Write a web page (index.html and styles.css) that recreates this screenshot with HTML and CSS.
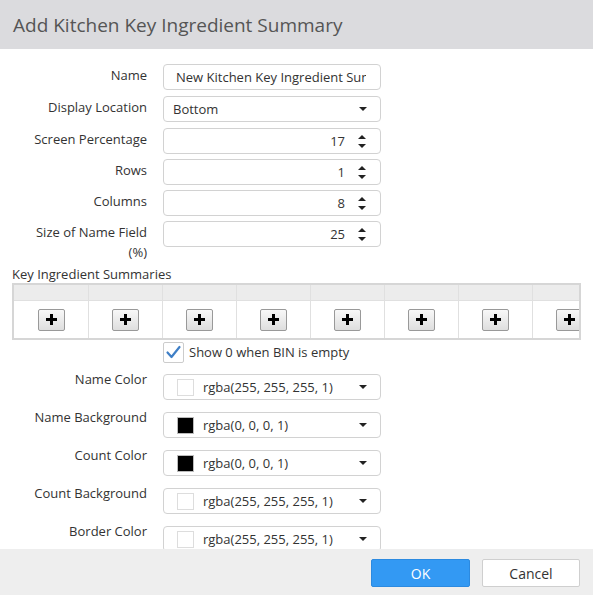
FILE: index.html
```html
<!DOCTYPE html>
<html>
<head>
<meta charset="utf-8">
<link rel="stylesheet" href="styles.css">
</head>
<body>
<div class="dialog">
  <div class="header"><h1 class="title">Add Kitchen Key Ingredient Summary</h1></div>
  <div class="content">
    <div class="form">
      <div class="row first">
        <div class="label">Name</div>
        <input class="field text" type="text" value="New Kitchen Key Ingredient Summary" readonly>
      </div>
      <div class="row first">
        <div class="label">Display Location</div>
        <div class="field select"><span class="val">Bottom</span><span class="caret"></span></div>
      </div>
      <div class="row">
        <div class="label">Screen Percentage</div>
        <div class="field number"><span class="num">17</span><span class="spin"><i class="up"></i><i class="down"></i></span></div>
      </div>
      <div class="row">
        <div class="label">Rows</div>
        <div class="field number"><span class="num">1</span><span class="spin"><i class="up"></i><i class="down"></i></span></div>
      </div>
      <div class="row">
        <div class="label">Columns</div>
        <div class="field number"><span class="num">8</span><span class="spin"><i class="up"></i><i class="down"></i></span></div>
      </div>
      <div class="row">
        <div class="label">Size of Name Field<br>(%)</div>
        <div class="field number"><span class="num">25</span><span class="spin"><i class="up"></i><i class="down"></i></span></div>
      </div>
    </div>

    <div class="section-title">Key Ingredient Summaries</div>
    <div class="grid">
      <div class="cols">
        <div class="col"><div class="col-head"></div><div class="col-body"><span class="plus"><svg width="11" height="11" viewBox="0 0 11 11"><path d="M4 0h3v4h4v3H7v4H4V7H0V4h4z" fill="#000"/></svg></span></div></div>
        <div class="col"><div class="col-head"></div><div class="col-body"><span class="plus"><svg width="11" height="11" viewBox="0 0 11 11"><path d="M4 0h3v4h4v3H7v4H4V7H0V4h4z" fill="#000"/></svg></span></div></div>
        <div class="col"><div class="col-head"></div><div class="col-body"><span class="plus"><svg width="11" height="11" viewBox="0 0 11 11"><path d="M4 0h3v4h4v3H7v4H4V7H0V4h4z" fill="#000"/></svg></span></div></div>
        <div class="col"><div class="col-head"></div><div class="col-body"><span class="plus"><svg width="11" height="11" viewBox="0 0 11 11"><path d="M4 0h3v4h4v3H7v4H4V7H0V4h4z" fill="#000"/></svg></span></div></div>
        <div class="col"><div class="col-head"></div><div class="col-body"><span class="plus"><svg width="11" height="11" viewBox="0 0 11 11"><path d="M4 0h3v4h4v3H7v4H4V7H0V4h4z" fill="#000"/></svg></span></div></div>
        <div class="col"><div class="col-head"></div><div class="col-body"><span class="plus"><svg width="11" height="11" viewBox="0 0 11 11"><path d="M4 0h3v4h4v3H7v4H4V7H0V4h4z" fill="#000"/></svg></span></div></div>
        <div class="col"><div class="col-head"></div><div class="col-body"><span class="plus"><svg width="11" height="11" viewBox="0 0 11 11"><path d="M4 0h3v4h4v3H7v4H4V7H0V4h4z" fill="#000"/></svg></span></div></div>
        <div class="col"><div class="col-head"></div><div class="col-body"><span class="plus"><svg width="11" height="11" viewBox="0 0 11 11"><path d="M4 0h3v4h4v3H7v4H4V7H0V4h4z" fill="#000"/></svg></span></div></div>
      </div>
    </div>

    <div class="check-row">
      <span class="checkbox"><svg width="19" height="19" viewBox="0 0 19 19"><path d="M3.5 9.5l4 4.5 8-10" fill="none" stroke="#3f7fc6" stroke-width="2.2" stroke-linecap="round" stroke-linejoin="round"/></svg></span>
      <span class="check-label">Show 0 when BIN is empty</span>
    </div>

    <div class="colors">
      <div class="crow">
        <div class="label">Name Color</div>
        <div class="field color"><span class="swatch white"></span><span class="val">rgba(255, 255, 255, 1)</span><span class="caret"></span></div>
      </div>
      <div class="crow">
        <div class="label">Name Background</div>
        <div class="field color"><span class="swatch black"></span><span class="val">rgba(0, 0, 0, 1)</span><span class="caret"></span></div>
      </div>
      <div class="crow">
        <div class="label">Count Color</div>
        <div class="field color"><span class="swatch black"></span><span class="val">rgba(0, 0, 0, 1)</span><span class="caret"></span></div>
      </div>
      <div class="crow">
        <div class="label">Count Background</div>
        <div class="field color"><span class="swatch white"></span><span class="val">rgba(255, 255, 255, 1)</span><span class="caret"></span></div>
      </div>
      <div class="crow">
        <div class="label">Border Color</div>
        <div class="field color"><span class="swatch white"></span><span class="val">rgba(255, 255, 255, 1)</span><span class="caret"></span></div>
      </div>
    </div>
  </div>
  <div class="footer">
    <button class="btn ok">OK</button>
    <button class="btn cancel">Cancel</button>
  </div>
</div>
</body>
</html>
```

FILE: styles.css
```css
* { box-sizing: border-box; }
html, body { margin: 0; padding: 0; }
body {
  font-family: "Open Sans", "Noto Sans", sans-serif;
  font-size: 13px;
  color: #333;
  background: #fff;
}
.dialog {
  width: 593px;
  height: 595px;
  display: flex;
  flex-direction: column;
  overflow: hidden;
}
.header {
  height: 49px;
  flex: none;
  background: #dbdbde;
  padding-left: 13px;
  display: flex;
  align-items: center;
}
.title {
  margin: 0;
  font-size: 19px;
  font-weight: 400;
  color: #555;
}
.content {
  flex: 1;
  overflow: hidden;
}
.form {
  padding-top: 15px;
  display: flex;
  flex-direction: column;
  gap: 5px;
}
.row {
  display: grid;
  grid-template-columns: 147px 218px;
  column-gap: 16px;
  align-items: start;
}
.row.first { margin-bottom: 1px; }
.label {
  text-align: right;
  line-height: 20px;
  padding-top: 1px;
  color: #333;
}
.field {
  height: 26px;
  border: 1px solid #d2d2d2;
  border-radius: 4px;
  display: flex;
  align-items: center;
  background: #fff;
  overflow: hidden;
  margin: 0;
}
input.field.text {
  display: block;
  width: 218px;
  padding: 0 14px 0 12px;
  font-family: "Open Sans", "Noto Sans", sans-serif;
  font-size: 13px;
  color: #333;
  outline: none;
}
.field.select { padding-left: 9px; }
.field .val { flex: 1; white-space: nowrap; }
.caret {
  width: 0; height: 0;
  border-left: 4px solid transparent;
  border-right: 4px solid transparent;
  border-top: 4px solid #222;
  margin-right: 13px;
  flex: none;
}
.field.number { justify-content: flex-end; }
.num { margin-right: 13px; }
.spin {
  width: 8px;
  margin-right: 14px;
  display: flex;
  flex-direction: column;
  gap: 5px;
}
.spin i { display: block; width: 0; height: 0; border-left: 4px solid transparent; border-right: 4px solid transparent; }
.spin .up { border-bottom: 4px solid #222; }
.spin .down { border-top: 4px solid #222; }

.section-title {
  margin-top: 3px;
  padding-left: 12px;
  line-height: 18px;
}
.grid {
  margin-left: 12px;
  width: 569px;
  border: 2px solid #d6d6d6;
  overflow: hidden;
}
.cols { display: flex; }
.col {
  width: 74px;
  flex: none;
  border-left: 1px solid #e0e0e0;
}
.col:first-child { border-left: none; }
.col-head {
  height: 16px;
  background: #ececec;
  border-bottom: 1px solid #e0e0e0;
}
.col-body {
  height: 37px;
  display: flex;
  align-items: center;
  justify-content: center;
}
.plus {
  width: 27px;
  height: 22px;
  border: 1px solid #999;
  border-radius: 2px;
  background: linear-gradient(#f8f8f8, #dedede);
  display: flex;
  align-items: center;
  justify-content: center;
}
.plus svg { display: block; }

.check-row {
  margin-top: 1px;
  padding-left: 163px;
  display: flex;
  align-items: center;
  gap: 5px;
  height: 22px;
}
.checkbox {
  width: 21px;
  height: 21px;
  border: 1px solid #ccc;
  border-radius: 2px;
  display: flex;
  align-items: center;
  justify-content: center;
  background: #fff;
}
.checkbox svg { display: block; }

.colors {
  margin-top: 11px;
  display: flex;
  flex-direction: column;
  gap: 12px;
}
.crow {
  display: grid;
  grid-template-columns: 147px 218px;
  column-gap: 16px;
  align-items: start;
}
.crow .label { margin-top: -5px; padding-top: 0; }
.field.color { padding-left: 13px; }
.swatch {
  width: 17px;
  height: 17px;
  flex: none;
  margin-right: 9px;
  border: 1px solid #ddd;
}
.swatch.white { background: #fff; }
.swatch.black { background: #000; border-color: #bbb; }

.footer {
  height: 46px;
  flex: none;
  background: #eeeeee;
  display: flex;
  justify-content: flex-end;
  align-items: flex-start;
  padding-top: 10px;
  padding-right: 13px;
  gap: 12px;
}
.btn {
  height: 28px;
  font-family: "Open Sans", "Noto Sans", sans-serif;
  font-size: 14px;
  border-radius: 2px;
  padding: 0;
  cursor: pointer;
}
.btn.ok {
  width: 99px;
  background: #3399f3;
  border: 1px solid #2c8ae0;
  color: #fff;
}
.btn.cancel {
  width: 98px;
  background: #fff;
  border: 1px solid #cfcfcf;
  color: #333;
}
```
